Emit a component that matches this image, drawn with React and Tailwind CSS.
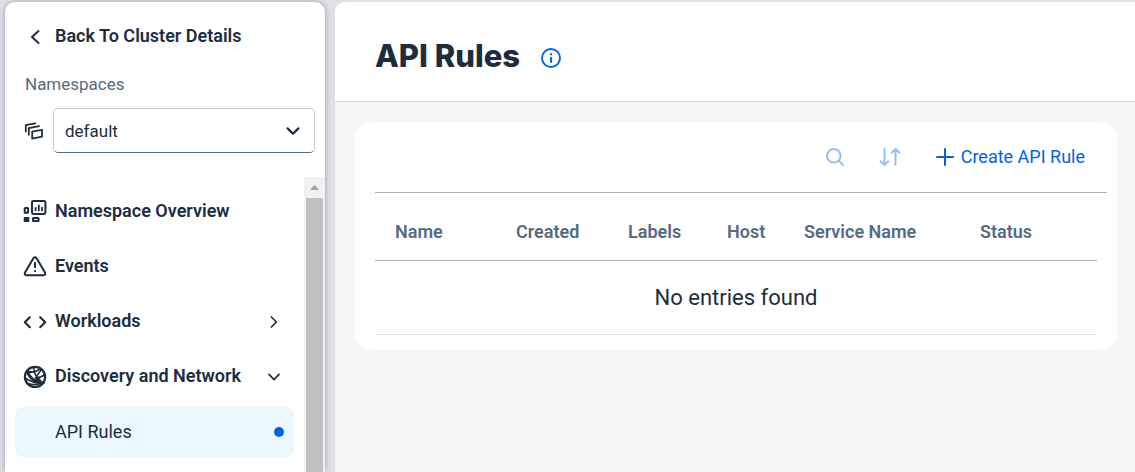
import React from 'react';

const stroke = {
  fill: 'none',
  stroke: 'currentColor',
  strokeWidth: 2,
  strokeLinecap: 'round',
  strokeLinejoin: 'round',
  'aria-hidden': true,
};

function BackIcon() {
  return (
    <svg viewBox="0 0 24 24" className="size-6 shrink-0" {...stroke}>
      <path d="M15.5 7 9 13 15.5 19" />
    </svg>
  );
}

function NamespacesIcon() {
  return (
    <svg viewBox="0 0 20 20" className="size-5 shrink-0" {...stroke} strokeWidth={1.8}>
      <path d="M1.8 10.6V4.2L11.2 2.4" />
      <path d="M4.8 13.8V7.2L15 5.2" />
      <path d="M8.2 10.6 18 8.8V15.6L8.2 17.6Z" />
    </svg>
  );
}

function OverviewIcon() {
  return (
    <svg viewBox="0 0 24 24" className="size-6 shrink-0" {...stroke}>
      <rect x="9" y="2" width="13.4" height="13" rx="1.4" />
      <path d="M12.6 9v2.4M15.8 6.4v5M19 8.6v2.8" strokeWidth={1.8} />
      <rect x="1.7" y="9" width="3.4" height="4.8" rx="0.5" />
      <rect x="0.7" y="18" width="5.6" height="5" rx="0.8" fill="currentColor" stroke="none" />
      <rect x="10" y="19" width="5.6" height="3" rx="0.5" />
    </svg>
  );
}

function EventsIcon() {
  return (
    <svg viewBox="0 0 24 24" className="size-6 shrink-0" {...stroke}>
      <path d="M10.4 4.3Q12 2.2 13.6 4.3L22 18.4Q23 20.9 20.6 21.2H3.4Q1 20.9 2 18.4Z" />
      <path d="M12 9v4.2M12 17v.2" />
    </svg>
  );
}

function WorkloadsIcon() {
  return (
    <svg viewBox="0 0 24 24" className="size-6 shrink-0" {...stroke} strokeWidth={2.2}>
      <path d="M6.8 8.2 1.8 13.2 6.8 18.2M17.2 8.2 22.2 13.2 17.2 18.2" />
    </svg>
  );
}

function NetworkIcon() {
  return (
    <svg viewBox="0 0 24 24" className="size-6 shrink-0" {...stroke}>
      <circle cx="12" cy="13" r="10.1" strokeWidth={2.2} />
      <path d="M4.2 7C6 13 12 19.4 20.6 18.6" strokeWidth={2.8} />
      <path d="M2.4 14.6C5 15.4 8 18.2 14 18.6" strokeWidth={1.8} />
      <path d="M10.6 3.6C11 7 12 11 14.4 14.6" strokeWidth={1.6} />
      <path d="M4.8 7.8C8 8.2 13.6 7.8 17 4.8" strokeWidth={1.8} />
      <path d="M18.2 6C15.6 8.8 14 11.4 13.2 14.4" strokeWidth={1.6} />
      <path d="M13.4 13.8C17 13.6 19.8 12.4 21.6 10.4" strokeWidth={1.8} />
      <path d="M12.6 13.6 17 15 18.6 18.6 14 18Z" fill="currentColor" strokeWidth={1} />
      <path d="M4.8 19.6C9 21 13.6 20.8 17.4 19.4" strokeWidth={1.6} />
    </svg>
  );
}

function Chevron({ open }) {
  return (
    <svg viewBox="0 0 16 16" className="size-4 shrink-0" {...stroke} strokeWidth={1.7}>
      <path d={open ? 'M3 6.4 8 11.6 13 6.4' : 'M5.4 4 10.4 9 5.4 14'} />
    </svg>
  );
}

function SearchIcon() {
  return (
    <svg viewBox="0 0 20 20" className="size-5" {...stroke}>
      <circle cx="8.8" cy="8.8" r="6.8" />
      <path d="M13.8 13.8 18 18" />
    </svg>
  );
}

function SortIcon() {
  return (
    <svg viewBox="0 0 22 20" className="h-5 w-[22px]" {...stroke}>
      <path d="M5.5 2V18M1.6 14.2 5.5 18 9.4 14.2M16.5 18V2M12.6 5.8 16.5 2 20.4 5.8" />
    </svg>
  );
}

function PlusIcon() {
  return (
    <svg viewBox="0 0 20 20" className="size-5" {...stroke}>
      <path d="M10 2V18M2 10H18" />
    </svg>
  );
}

function InfoIcon() {
  return (
    <svg viewBox="0 0 22 22" className="size-[22px]" {...stroke}>
      <circle cx="11" cy="11" r="9" strokeWidth={1.9} />
      <path d="M11 10.8V15" />
      <path d="M11 7.2v.1" strokeWidth={2.2} />
    </svg>
  );
}

const items = [
  { label: 'Namespace Overview', Icon: OverviewIcon },
  { label: 'Events', Icon: EventsIcon },
  { label: 'Workloads', Icon: WorkloadsIcon, open: false },
  { label: 'Discovery and Network', Icon: NetworkIcon, open: true },
];

function Sidebar() {
  return (
    <aside className="flex w-80 shrink-0 flex-col rounded-t-[10px] bg-white shadow-[0_0_6px_#9aa3af]">
      <button type="button" className="mt-[14px] ml-[18px] flex h-10 items-center gap-2 text-left font-semibold">
        <BackIcon />
        Back To Cluster Details
      </button>
      <label htmlFor="namespace" className="mt-4 ml-5 text-[17px] leading-6 text-[#556b82]">
        Namespaces
      </label>
      <div className="mt-3 mr-[10px] ml-[19px] flex items-center gap-[9px]">
        <NamespacesIcon />
        <div className="relative flex-1">
          <select
            id="namespace"
            defaultValue="default"
            className="block h-[45px] w-full appearance-none rounded-[5px] border border-[#c9ced6] border-b-[#556b82] bg-white px-[11px] text-[17px]"
          >
            <option>default</option>
          </select>
          <svg viewBox="0 0 16 16" className="pointer-events-none absolute top-[15px] right-[14px] size-4" {...stroke} strokeWidth={2.2}>
            <path d="M2.6 5.4 8 10.8 13.4 5.4" />
          </svg>
        </div>
      </div>
      <div className="mt-6 flex flex-1">
        <nav aria-label="Namespace" className="flex flex-1 flex-col gap-[5px] px-[10px] pt-[9px]">
          {items.map(({ label, Icon, open }) => (
            <button key={label} type="button" className="flex h-[50px] items-center gap-2 pr-3 pl-2 text-left font-semibold" aria-expanded={open}>
              <Icon />
              <span className="flex-1 whitespace-nowrap">{label}</span>
              {open !== undefined && <Chevron open={open} />}
            </button>
          ))}
          <a href="#api-rules" aria-current="page" className="mt-px flex h-[50px] items-center justify-between rounded-lg bg-[#ebf8ff] pr-[10px] pl-10">
            API Rules
            <span className="size-[10px] rounded-full bg-[#0064d9]" />
          </a>
        </nav>
        <div aria-hidden="true" className="flex w-[21px] flex-col bg-[#f1f1f1] px-[2px]">
          <div className="flex h-[21px] items-center justify-center">
            <svg viewBox="0 0 9 5" className="h-[5px] w-[9px] fill-[#a3a3a3]">
              <path d="M0 5 4.5 0 9 5Z" />
            </svg>
          </div>
          <div className="flex-1 bg-[#c1c1c1]" />
        </div>
      </div>
    </aside>
  );
}

const columns = [
  { label: 'Name', width: 'w-[121px]' },
  { label: 'Created', width: 'w-[112px]' },
  { label: 'Labels', width: 'w-[99px]' },
  { label: 'Host', width: 'w-[77px]' },
  { label: 'Service Name', width: 'w-[176px]' },
  { label: 'Status', width: '' },
];

export default function App() {
  return (
    <div className="flex min-h-screen gap-[10px] bg-[#dfe1e4] pt-[2px] pl-[5px] font-[Roboto,sans-serif] text-[18px] leading-6 text-[#1d2d3e]">
      <Sidebar />
      <main className="min-w-0 flex-1 rounded-tl-[10px] bg-[#f4f5f7]">
        <header className="flex h-[100px] items-center gap-5 rounded-tl-[10px] border-b border-[#d5d8dc] bg-white px-10 pt-2">
          <h1 className="font-[Inter,sans-serif] text-[31px] leading-10 font-extrabold">API Rules</h1>
          <button type="button" aria-label="About API Rules" className="mt-1 text-[#0064d9]">
            <InfoIcon />
          </button>
        </header>
        <section className="mt-5 mr-[18px] ml-5 rounded-2xl bg-white pb-[15px] pl-5">
          <div className="mr-[10px] flex h-[71px] items-center justify-end border-b border-[#a8b3bf] pr-[22px] text-[#0064d9]">
            <button type="button" aria-label="Search" disabled className="mr-[34px] opacity-40">
              <SearchIcon />
            </button>
            <button type="button" aria-label="Sort" disabled className="mr-[34px] opacity-40">
              <SortIcon />
            </button>
            <button type="button" className="flex items-center gap-[6px]">
              <PlusIcon />
              Create API Rule
            </button>
          </div>
          <div className="mr-5">
            <table className="w-full table-fixed border-separate border-spacing-0">
              <thead>
                <tr className="text-left text-[#556b82]">
                  {columns.map(({ label, width }) => (
                    <th
                      key={label}
                      scope="col"
                      className={`h-[68px] border-b border-[#a8b3bf] pt-[10px] pl-5 font-semibold whitespace-nowrap ${width}`}
                    >
                      {label}
                    </th>
                  ))}
                </tr>
              </thead>
              <tbody>
                <tr>
                  <td colSpan={6} className="h-[74px] border-b border-[#e1e3e5] text-center text-[22px]">
                    No entries found
                  </td>
                </tr>
              </tbody>
            </table>
          </div>
        </section>
      </main>
    </div>
  );
}
